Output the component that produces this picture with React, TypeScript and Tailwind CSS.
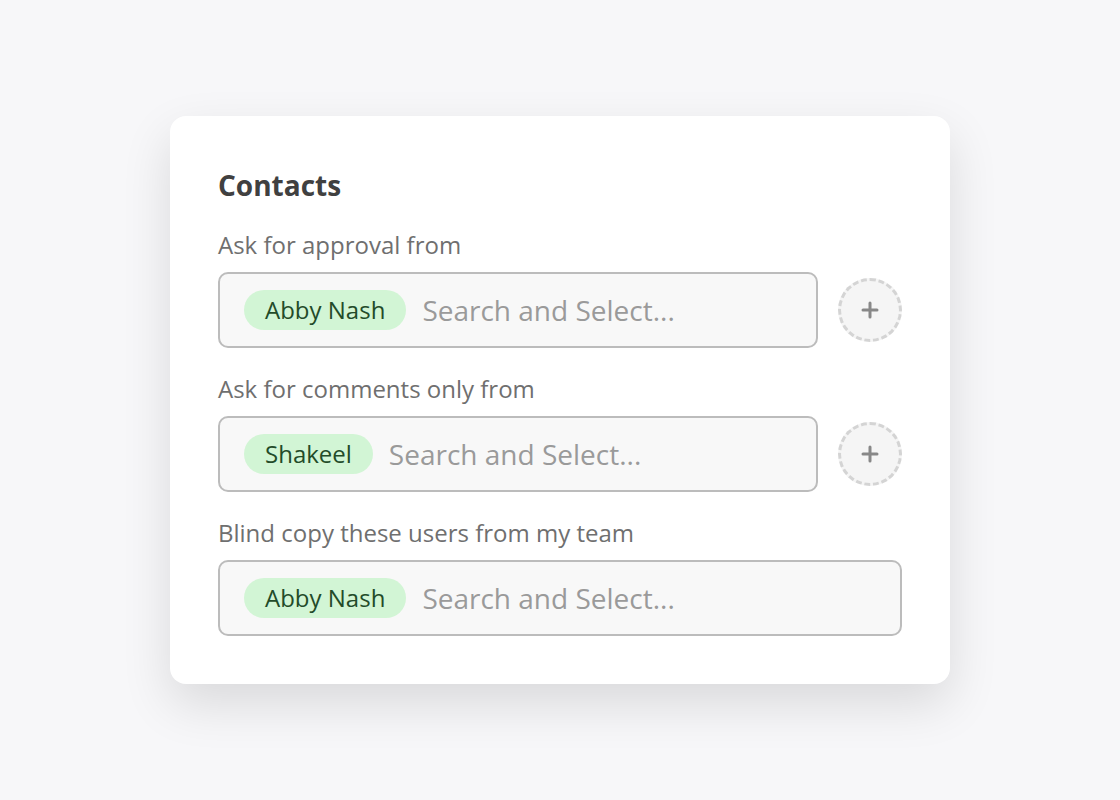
import { Plus } from "lucide-react";

type Field = {
  label: string;
  chip: string;
  addButton: boolean;
};

const fields: Field[] = [
  { label: "Ask for approval from", chip: "Abby Nash", addButton: true },
  { label: "Ask for comments only from", chip: "Shakeel", addButton: true },
  { label: "Blind copy these users from my team", chip: "Abby Nash", addButton: false },
];

function ContactField({ field }: { field: Field }) {
  return (
    <div className="flex flex-col">
      <label className="text-[24px] leading-[30px] text-[#6f6f6f] mb-3">
        {field.label}
      </label>
      <div className="flex items-center gap-5">
        <div className="flex-1 h-[76px] flex items-center gap-4 px-6 rounded-[10px] border-2 border-[#bcbcbc] bg-[#f8f8f8]">
          <span className="h-10 px-[21px] flex items-center rounded-full bg-[#d2f5d5] text-[#234b29] text-[24px]">
            {field.chip}
          </span>
          <input
            className="flex-1 min-w-0 bg-transparent outline-none text-[28px] text-[#999] placeholder:text-[#9a9a9a]"
            placeholder="Search and Select..."
          />
        </div>
        {field.addButton && (
          <button className="w-16 h-16 rounded-full border-[3px] border-dashed border-[#d4d4d4] bg-[#f5f5f5] flex items-center justify-center text-[#888]">
            <Plus size={24} strokeWidth={3} />
          </button>
        )}
      </div>
    </div>
  );
}

export default function App() {
  return (
    <div
      className="min-h-[800px] w-full bg-[#f7f7f9] pt-[116px] flex justify-center"
      style={{ fontFamily: '"Open Sans", "Noto Sans", sans-serif' }}
    >
      <div className="w-[780px] h-[568px] bg-white rounded-2xl shadow-[0_20px_50px_rgba(0,0,0,0.12)] px-12 pt-[53px]">
        <h1 className="text-[28px] leading-8 font-bold text-[#404040] mb-[29px]">
          Contacts
        </h1>
        <div className="flex flex-col gap-[26px]">
          {fields.map((f) => (
            <ContactField key={f.label} field={f} />
          ))}
        </div>
      </div>
    </div>
  );
}
